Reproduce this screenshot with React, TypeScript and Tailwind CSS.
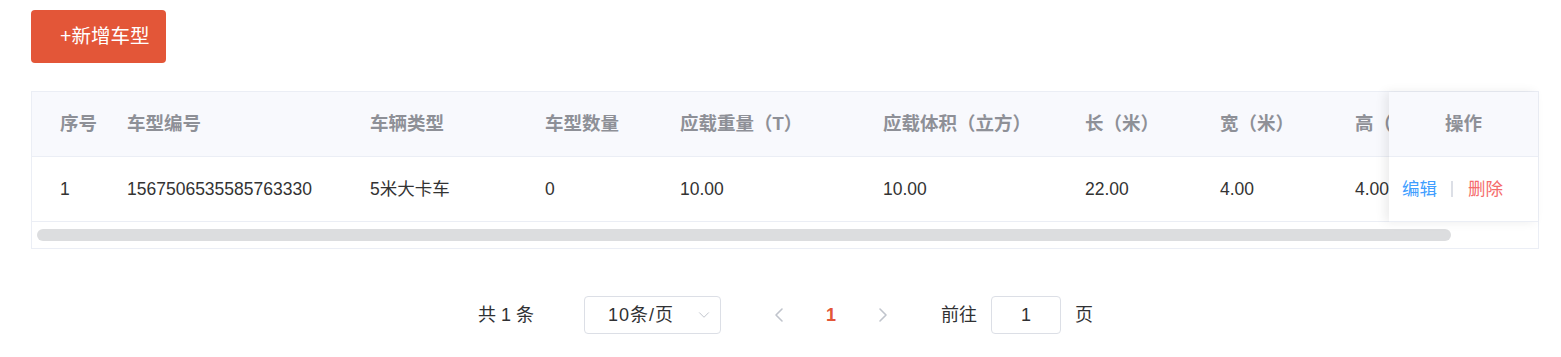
import { ChevronDown, ChevronLeft, ChevronRight } from 'lucide-react';

const font = 'font-["Liberation_Sans","Noto_Sans_CJK_SC",sans-serif]';

const columns = [
  { key: 'idx', title: '序号', width: 'w-[95px] pl-[28px]' },
  { key: 'code', title: '车型编号', width: 'w-[243px]' },
  { key: 'type', title: '车辆类型', width: 'w-[175px]' },
  { key: 'count', title: '车型数量', width: 'w-[135px]' },
  { key: 'weight', title: '应载重量（T）', width: 'w-[203px]' },
  { key: 'volume', title: '应载体积（立方）', width: 'w-[202px]' },
  { key: 'len', title: '长（米）', width: 'w-[135px]' },
  { key: 'wid', title: '宽（米）', width: 'w-[135px]' },
  { key: 'hgt', title: '高（米）', width: 'w-[135px]' },
];

const rows = [
  {
    idx: '1',
    code: '1567506535585763330',
    type: '5米大卡车',
    count: '0',
    weight: '10.00',
    volume: '10.00',
    len: '22.00',
    wid: '4.00',
    hgt: '4.00',
  },
];

export default function App() {
  return (
    <div className={`${font} bg-white min-h-[357px] px-[31px] pt-[10px]`}>
      <button className="h-[53px] w-[135px] pl-[29px] pr-[10px] bg-[#e35638] text-white text-[19.5px] rounded-[4px] text-left whitespace-nowrap">
        +新增车型
      </button>

      {/* table */}
      <div className="relative mt-[28px] w-[1508px] border border-[#ebeef5]">
        <div className="overflow-hidden">
          <div className="flex w-max h-[65px] items-center bg-[#f8f9fd] border-b border-[#ebeef5]">
            {columns.map((c) => (
              <div key={c.key} className={`${c.width} shrink-0 whitespace-nowrap text-[18.5px] font-bold text-[#8e9097]`}>
                {c.title}
              </div>
            ))}
          </div>
          {rows.map((r) => (
            <div key={r.code} className="flex w-max h-[65px] items-center border-b border-[#ebeef5]">
              {columns.map((c) => (
                <div key={c.key} className={`${c.width} shrink-0 whitespace-nowrap text-[17.5px] text-[#333]`}>
                  {r[c.key as keyof typeof r]}
                </div>
              ))}
            </div>
          ))}
        </div>
        {/* scrollbar */}
        <div className="h-[26px] pl-[5px] pt-[7px]">
          <div className="h-[12px] w-[1414px] rounded-full bg-[#dcdddf]" />
        </div>

        {/* fixed action column */}
        <div className="absolute right-0 top-0 w-[149px] bg-white shadow-[-4px_0_10px_rgba(0,0,0,0.08)]">
          <div className="h-[65px] flex items-center justify-center bg-[#f8f9fd] border-b border-[#ebeef5] text-[18.5px] font-bold text-[#8e9097]">
            操作
          </div>
          <div className="h-[65px] flex items-center pl-[13px] text-[17.5px] border-b border-[#ebeef5]">
            <span className="text-[#409eff]">编辑</span>
            <span className="ml-[14px] mr-[15px] h-[16px] w-[2px] bg-[#dcdfe6]" />
            <span className="text-[#f56c6c]">删除</span>
          </div>
        </div>
      </div>

      {/* pagination */}
      <div className="mt-[47px] flex items-center pl-[447px] text-[18px] text-[#303133]">
        <span className="whitespace-pre">共 1 条</span>
        <div className="ml-[50px] flex h-[38px] w-[137px] items-center justify-between rounded-[4px] border border-[#dcdfe6] pl-[23px] pr-[7px]">
          <span className="tracking-[1px]">10条/页</span>
          <ChevronDown className="h-[18px] w-[18px] text-[#c0c4cc]" strokeWidth={1.3} />
        </div>
        <ChevronLeft className="ml-[46px] h-[24px] w-[24px] text-[#c0c4cc]" strokeWidth={1.6} />
        <span className="ml-[35px] font-bold text-[#e35638]">1</span>
        <ChevronRight className="ml-[35px] h-[24px] w-[24px] text-[#c0c4cc]" strokeWidth={1.6} />
        <span className="ml-[46px]">前往</span>
        <div className="ml-[14px] flex h-[38px] w-[70px] items-center justify-center rounded-[4px] border border-[#dcdfe6]">
          1
        </div>
        <span className="ml-[14px]">页</span>
      </div>
    </div>
  );
}
